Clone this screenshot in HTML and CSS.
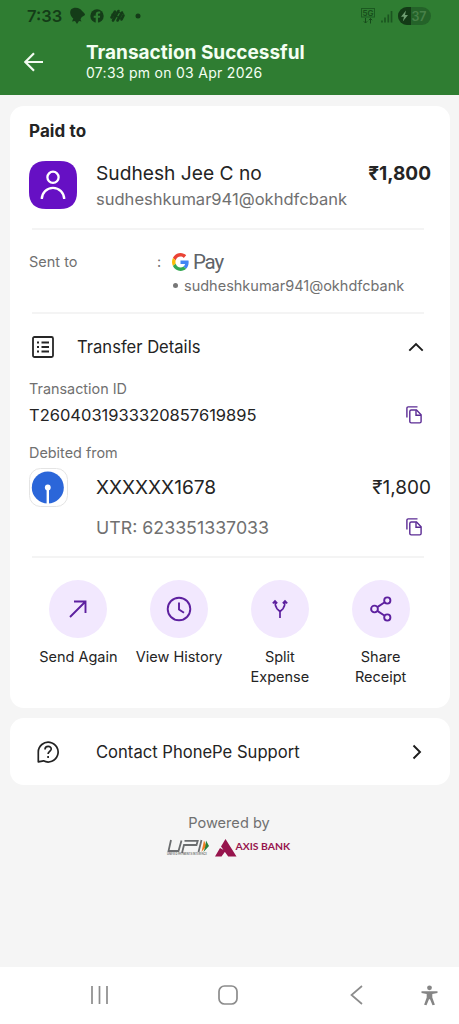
FILE: index.html
```html
<!DOCTYPE html>
<html lang="en">
<head>
<meta charset="utf-8">
<title>Transaction Successful</title>
<link rel="stylesheet" href="styles.css">
</head>
<body>
<div class="screen">
  <header class="header">
    <div class="status">
      <span class="clock">7:33</span>
      <svg class="status-apps" width="76" height="18" viewBox="0 0 76 18">
        <path d="M2 2.500c2-2 6-2.500 9-.5 1.500 1 2.500 2.500 4.500 4.500 1 .8.500 2-1 2.500-2 .8-2.500 2-3 3.500l1 2-2.500-.5-2 3-2-3-3 .5 1.300-3C2 9.500 0 6 2 2.500z" fill="#143c18"/>
        <circle cx="28" cy="9" r="6.700" fill="#143c18"/>
        <path d="M26.700 16v-5.200h-2V8.700h2V7.500c0-2 1.200-3 3-3h1.500v2h-1c-.9 0-1.200.4-1.200 1.100v1.100h2.200l-.4 2.100H29V16z" fill="#2f7d32"/>
        <g stroke="#143c18" stroke-width="2.600" fill="none" stroke-linecap="round"><path d="M42.500 10.500l3.500-6M44 13.500l5.500-9.500M48.500 13.500L53 5.500M52.500 12.500l2-4"/></g>
        <path d="M42.500 7l4 2M47 9l5 2.500M50 5.500l5 1.500" stroke="#143c18" stroke-width="1.300"/>
        <circle cx="69" cy="9" r="2.500" fill="#143c18"/>
      </svg>
      <svg class="status-system" width="72" height="18" viewBox="0 0 72 18">
        <rect x="1.500" y="1.500" width="13" height="8.500" fill="none" stroke="#1b5a20" stroke-width="1"/>
        <text x="8" y="8.800" class="net">5G</text>
        <path d="M5.500 11v5M3.800 14.300l1.700 1.700 1.700-1.700M10.500 16.500V11.500M8.800 13.200l1.700-1.700 1.700 1.700" fill="none" stroke="#164a1a" stroke-width="1"/>
        <path d="M22 13.500v2M25 10.500v5M28.300 7.500v8M31.500 4v11.500" stroke="#1b5520" stroke-width="1.700"/>
        <rect x="38" y="0" width="33" height="18" rx="9" fill="#246329"/>
        <path d="M47 0h4v18h-4a9 9 0 0 1 0-18z" fill="#133a16"/>
        <path d="M46 3.500l-5 6.200h3l-1.200 4.800 5.200-6.500h-3z" fill="#6f9d72"/>
        <text x="59" y="13.700" class="battery">37</text>
      </svg>
    </div>
    <div class="title-row">
      <svg width="20" height="20" viewBox="0 0 20 20"><path d="M19 10H1.500M10 1.300L1.300 10l8.700 8.700" fill="none" stroke="#f2fbf1" stroke-width="2.200"/></svg>
      <div class="titles">
        <h1>Transaction Successful</h1>
        <p>07:33 pm on 03 Apr 2026</p>
      </div>
    </div>
  </header>

  <main>
    <section class="card">
      <h2 class="paid">Paid to</h2>
      <div class="payee">
        <svg width="48" height="48" viewBox="0 0 48 48"><path d="M17 0h14q17 0 17 17v14q0 17-17 17H17Q0 48 0 31V17Q0 0 17 0z" fill="#6610c4"/><circle cx="24" cy="16.300" r="5.600" fill="none" stroke="#fff" stroke-width="2.300"/><path d="M12.800 38a11.200 11.200 0 0 1 22.400 0" fill="none" stroke="#fff" stroke-width="2.300"/></svg>
        <div class="payee-text"><div class="name">Sudhesh Jee C no</div><div class="vpa">sudheshkumar941@okhdfcbank</div></div>
        <div class="amount bold">₹1,800</div>
      </div>
      <hr>
      <div class="sent">
        <span class="sent-label">Sent to</span><span class="colon">:</span>
        <div class="sent-value">
          <div class="gpay">
            <svg width="17" height="18" viewBox="0 0 48 48" preserveAspectRatio="none"><path fill="#EA4335" d="M24 9.500c3.540 0 6.710 1.220 9.210 3.600l6.850-6.850C35.900 2.380 30.470 0 24 0 14.620 0 6.510 5.380 2.560 13.220l7.980 6.190C12.430 13.720 17.740 9.500 24 9.500z"/><path fill="#4285F4" d="M46.980 24.550c0-1.570-.15-3.090-.38-4.550H24v9.020h12.940c-.58 2.960-2.260 5.480-4.780 7.180l7.730 6c4.510-4.180 7.090-10.360 7.090-17.650z"/><path fill="#FBBC05" d="M10.530 28.590c-.48-1.450-.76-2.990-.76-4.590s.27-3.140.76-4.590l-7.980-6.190C.92 16.460 0 20.120 0 24s.92 7.540 2.560 10.780z"/><path fill="#34A853" d="M24 48c6.480 0 11.930-2.130 15.890-5.810l-7.730-6c-2.150 1.450-4.920 2.300-8.160 2.300-6.260 0-11.570-4.220-13.470-9.910l-7.980 6.190C6.510 42.620 14.620 48 24 48z"/></svg>
            <span>Pay</span>
          </div>
          <div class="sent-vpa"><i></i><span>sudheshkumar941@okhdfcbank</span></div>
        </div>
      </div>
      <hr>
      <div class="details-head">
        <svg width="22" height="22" viewBox="0 0 22 22" fill="none" stroke="#262626" stroke-width="1.800"><rect x="1" y="1" width="20" height="20" rx="1.500"/><path d="M9.500 6.500h7.500M9.500 11h7.500M9.500 15.500h7.500M5 6.500h2M5 11h2M5 15.500h2"/></svg>
        <span>Transfer Details</span>
        <svg class="chev" width="16" height="10" viewBox="0 0 16 10"><path d="M1.300 8.700L8 2l6.700 6.700" fill="none" stroke="#1c1c1c" stroke-width="1.900"/></svg>
      </div>
      <div class="label txn-label">Transaction ID</div>
      <div class="copy-row txn">
        <span>T2604031933320857619895</span>
        <svg class="copy" width="16" height="18" viewBox="0 0 16 18"><use href="#copy"/></svg>
      </div>
      <div class="label debit-label">Debited from</div>
      <div class="bank">
        <svg width="39" height="39" viewBox="0 0 39 39"><rect x=".5" y=".5" width="38" height="38" rx="11" fill="#fff" stroke="#e4e4e4"/><circle cx="18.800" cy="19.500" r="16" fill="#2b66d9"/><circle cx="18.800" cy="19.500" r="2.900" fill="#fff"/><path d="M18.800 20v16" stroke="#fff" stroke-width="2.400"/></svg>
        <span class="account">XXXXXX1678</span>
        <span class="amount">₹1,800</span>
      </div>
      <div class="copy-row utr">
        <span>UTR: 623351337033</span>
        <svg class="copy" width="16" height="18" viewBox="0 0 16 18"><g id="copy" fill="none" stroke="#5b2b94" stroke-width="1.400"><path d="M.9 11.500V2.200Q.9.900 2.200.9H11.500"/><path d="M5.300 4h5.200l4.600 4.800v6.700q0 1.400-1.400 1.400H5.200q-1.400 0-1.400-1.400V5.400Q3.800 4 5.300 4z"/><path d="M10 4.200v5h5"/></g></svg>
      </div>
      <hr>
      <div class="actions">
        <div class="action"><div class="disc"><svg width="30" height="30" viewBox="0 0 30 30"><path d="M7 23L22.500 7.500M11 7.500h11.500V19" /></svg></div><span>Send Again</span></div>
        <div class="action"><div class="disc"><svg width="30" height="30" viewBox="0 0 30 30"><circle cx="15" cy="15" r="11.300"/><path d="M15 8.500V15.500l5 3.300"/></svg></div><span>View History</span></div>
        <div class="action"><div class="disc"><svg width="30" height="30" viewBox="0 0 30 30"><path d="M15 24v-6.500L12 14.800Q10 12 10 7.500M15 17.500l3-2.700Q20 12 20 7.500M7.800 9.300L10 7l2.200 2.300M17.800 9.300L20 7l2.200 2.300" stroke-width="1.700"/></svg></div><span>Split<br>Expense</span></div>
        <div class="action"><div class="disc"><svg width="30" height="30" viewBox="0 0 30 30"><circle cx="8.500" cy="15" r="3.400"/><circle cx="21.300" cy="6.500" r="3.100"/><circle cx="21.300" cy="23.500" r="3.100"/><path d="M11.300 13.100l7.400-4.900M11.300 16.900l7.400 4.900"/></svg></div><span>Share<br>Receipt</span></div>
      </div>
    </section>

    <section class="card support">
      <svg width="22" height="22" viewBox="0 0 22 22" fill="none" stroke="#222" stroke-width="1.700"><path d="M1.300 20.800V11A9.900 9.900 0 1 1 6.500 19.800z" stroke-linejoin="round"/><path d="M8 8.500c0-4.200 6.600-3.900 6.200-.3-.3 2.200-3 2.300-3.100 4.800M11.100 15v1.900"/></svg>
      <span>Contact PhonePe Support</span>
      <svg class="chev" width="10" height="16" viewBox="0 0 10 16"><path d="M1.500 1.500L8 8l-6.500 6.500" fill="none" stroke="#1c1c1c" stroke-width="1.900"/></svg>
    </section>

    <footer class="powered">
      <span>Powered by</span>
      <svg width="126" height="20" viewBox="0 0 126 20">
        <g fill="none" stroke="#6b6d6f" stroke-width="1.800"><path d="M5 2L2.500 13h10L15.500 2.500M16 15l2-8h12.500l1.200-4.200H18.500M35.500 2L32.500 14"/></g>
        <path d="M38 2.500l2.500 5.500-5 6z" fill="#ef7d22"/><path d="M40 2.500L43 8l-5.500 6 2-6z" fill="#27803b"/>
        <text x="1" y="17" class="upi-tag" textLength="40" lengthAdjust="spacingAndGlyphs">UNIFIED PAYMENTS INTERFACE</text>
        <path d="M59.500 1L70.500 18.500H62.200L55 8.500zM54 10l5.500 3-4 5.500H49z" fill="#97144d"/>
        <text x="69.500" y="12" class="axis" textLength="54.500" lengthAdjust="spacingAndGlyphs">AXIS BANK</text>
      </svg>
    </footer>
  </main>

  <nav class="nav">
    <svg width="459" height="57" viewBox="0 0 459 57" fill="none" stroke="#8c8c8c" stroke-width="1.700">
      <path d="M92 19v18M99.500 19v18M107 19v18"/>
      <rect x="219" y="19" width="18" height="18" rx="5.500"/>
      <path d="M362 19l-10.500 9L362 37"/>
      <g fill="#858585" stroke="none"><circle cx="429.500" cy="20.800" r="2.400"/><path d="M421.500 24.200h16v1.900l-5.200.8v3.600l2.600 7.300-2.400.5-2.500-6h-1l-2.500 6-2.400-.5 2.600-7.300v-3.600l-5.200-.8z"/></g>
    </svg>
  </nav>
</div>
</body>
</html>
```
FILE: styles.css
```css
* { box-sizing: border-box; margin: 0; padding: 0; }
body { font-family: Inter, "Noto Sans", sans-serif; color: #242424; background: #f5f5f5; }
svg { display: block; flex: none; }
.screen { width: 459px; height: 1024px; display: flex; flex-direction: column; overflow: hidden; white-space: nowrap; }

.header { height: 95px; background: #2f7d32; }
.status { display: flex; align-items: center; height: 31px; padding: 0 27px; }
.clock { width: 42px; font-size: 16.500px; font-weight: 600; line-height: 18px; color: #143c18; }
.status-system { margin-left: auto; }
.net { font-size: 8px; font-weight: 600; text-anchor: middle; fill: #174d1b; }
.battery { font-size: 12.500px; font-weight: 600; text-anchor: middle; fill: #478048; }
.title-row { display: flex; align-items: center; height: 61px; padding-left: 24px; }
.titles { padding-left: 42px; color: #f4fff3; }
h1 { font-size: 19px; line-height: 22px; padding-top: 1px; font-weight: 700; }
.titles p { font-size: 14px; line-height: 18px; letter-spacing: .28px; }

main { flex: 1; padding: 11px 9px 0 10px; }
.card { background: #fff; border-radius: 14px; padding: 0 19px; height: 602px; }
hr { border: 0; height: 2px; margin: 0 7px 0 3px; background: #f4f4f4; }
.paid { font-size: 17px; font-weight: 700; line-height: 50px; letter-spacing: .1px; }
.payee { display: flex; height: 72px; padding-top: 5px; }
.payee-text { padding-left: 19px; }
.name { font-size: 19.200px; line-height: 25px; }
.vpa { font-size: 16.550px; line-height: 27px; color: #707070; }
.amount { margin-left: auto; font-size: 19px; line-height: 25px; }
.bold { font-weight: 700; }

.sent { display: flex; height: 82px; padding-top: 20px; font-size: 14.500px; line-height: 24px; color: #707070; }
.sent-label { width: 128px; }
.colon { width: 15px; }
.gpay { display: flex; align-items: center; gap: 4px; height: 24px; font-family: Roboto, sans-serif; font-size: 20.500px; letter-spacing: -1.200px; color: #606368; }
.sent-vpa { display: flex; align-items: center; gap: 6px; line-height: 23px; }
.sent-vpa i { width: 5px; height: 5px; margin-left: 1px; border-radius: 50%; background: #777; }

.details-head { display: flex; align-items: center; height: 63px; padding: 2px 7px 0 3px; font-size: 16.600px; }
.details-head span { padding-left: 23px; }
.chev { margin-left: auto; }
.label { font-size: 14.400px; color: #707070; line-height: 24px; }
.copy-row { display: flex; align-items: center; padding-right: 9px; }
.copy { margin-left: auto; }
.txn { height: 27px; font-size: 16.500px; }
.debit-label { padding-top: 13px; height: 37px; }
.bank { display: flex; align-items: center; height: 44px; font-size: 19.100px; }
.account { padding-left: 28px; }
.utr { height: 36px; margin-bottom: 11px; padding-left: 67px; font-size: 17.800px; color: #707070; }
.actions { display: grid; grid-template-columns: repeat(4, 1fr); margin: 0 0 0 -1px; padding-top: 22px; }
.action { display: flex; flex-direction: column; align-items: center; gap: 9px; font-size: 14.500px; line-height: 20px; text-align: center; }
.disc { display: flex; align-items: center; justify-content: center; width: 58px; height: 58px; border-radius: 50%; background: #f2e8fe; }
.disc svg { fill: none; stroke: #5d209f; stroke-width: 1.900; }

.support { display: flex; align-items: center; height: 67px; margin-top: 10px; padding: 0 28px 0 27px; font-size: 16.600px; }
.support span { padding-left: 37px; }
.powered { display: flex; flex-direction: column; align-items: center; gap: 3px; padding: 26px 2px 0 0; font-size: 14.600px; line-height: 24px; color: #707070; }
.upi-tag { font-size: 3px; fill: #666; font-weight: 600; }
.axis { font-family: Lato, sans-serif; font-size: 10px; font-weight: 700; fill: #97144d; }
.nav { height: 57px; background: #fff; }
```
